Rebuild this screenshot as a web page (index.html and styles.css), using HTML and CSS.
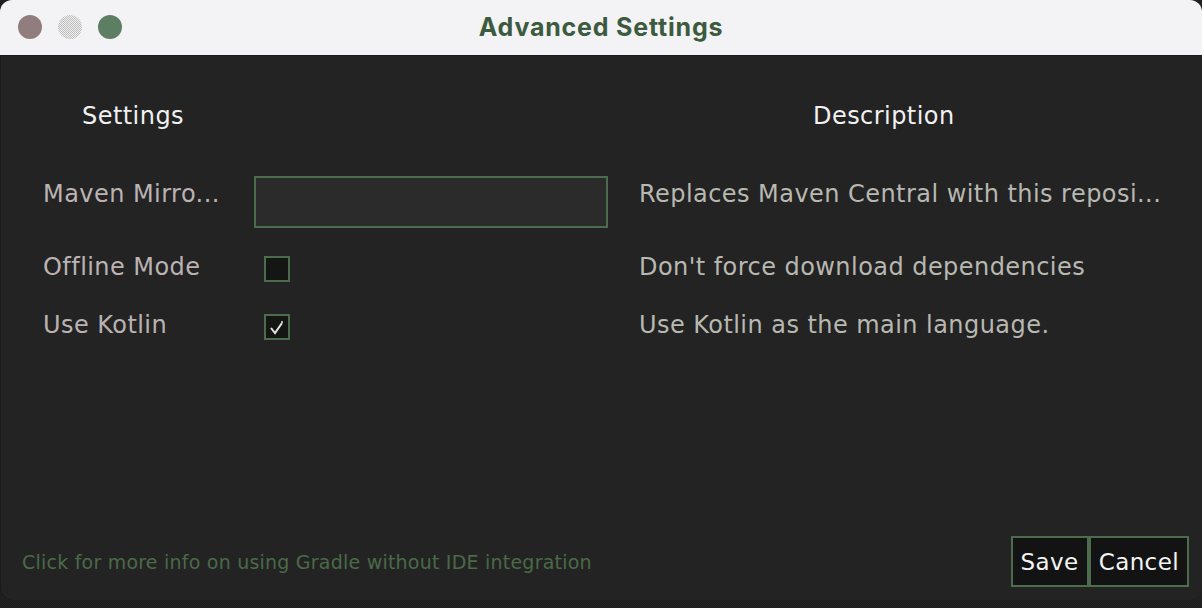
FILE: index.html
```html
<!DOCTYPE html>
<html>
<head>
<meta charset="utf-8">
<link rel="stylesheet" href="styles.css">
</head>
<body>
<div class="window">
  <div class="titlebar">
    <div class="lights">
      <span class="light red"></span>
      <span class="light gray"></span>
      <span class="light green"></span>
    </div>
    <div class="title">Advanced Settings</div>
    <div></div>
  </div>
  <div class="content">
    <div class="heads">
      <div class="head-settings">Settings</div>
      <div class="head-desc">Description</div>
    </div>
    <div class="row row-input">
      <div class="label">Maven Mirro...</div>
      <div class="control"><div class="textfield"></div></div>
      <div class="desc">Replaces Maven Central with this reposi...</div>
    </div>
    <div class="row row-check">
      <div class="label">Offline Mode</div>
      <div class="control"><span class="checkbox"></span></div>
      <div class="desc">Don't force download dependencies</div>
    </div>
    <div class="row row-check">
      <div class="label">Use Kotlin</div>
      <div class="control"><span class="checkbox"><svg width="22" height="22" viewBox="0 0 22 22"><polyline points="5,12 9,17 16,7" fill="none" stroke="#e4e4e4" stroke-width="2"/><rect x="15" y="5" width="2" height="2" fill="#c9a5a5"/></svg></span></div>
      <div class="desc">Use Kotlin as the main language.</div>
    </div>
    <div class="spacer"></div>
    <div class="footer">
      <div class="link">Click for more info on using Gradle without IDE integration</div>
      <div class="buttons">
        <div class="btn">Save</div>
        <div class="btn">Cancel</div>
      </div>
    </div>
  </div>
</div>
</body>
</html>
```
FILE: styles.css
```css
html, body {
  margin: 0;
  padding: 0;
}
body {
  width: 1202px;
  height: 608px;
  background: repeating-conic-gradient(#1a1a1a 0 25%, #262626 0 50%) 0 0 / 2px 2px;
  overflow: hidden;
  font-family: "DejaVu Sans", "Liberation Sans", sans-serif;
}
.window {
  width: 1202px;
  height: 600px;
  border-radius: 12px;
  overflow: hidden;
  background: #232323;
  display: flex;
  flex-direction: column;
  box-shadow: inset 1px 0 0 #1a1a1a;
}
.titlebar {
  height: 56px;
  flex: none;
  background: #f3f3f5;
  display: grid;
  grid-template-columns: 1fr auto 1fr;
  align-items: center;
  border-bottom: 1px solid #1b1b1b;
  box-sizing: border-box;
}
.lights {
  display: flex;
  gap: 16px;
  padding-left: 18px;
  padding-bottom: 1px;
}
.light {
  width: 24px;
  height: 24px;
  border-radius: 50%;
  display: block;
}
.light.red { background: #917d7d; }
.light.gray {
  background: repeating-conic-gradient(#bdbdbd 0 25%, #f0f0f0 0 50%) 0 0 / 2px 2px;
}
.light.green { background: #5d7e63; }
.title {
  font-family: Inter, "Noto Sans", sans-serif;
  font-weight: 700;
  font-size: 25px;
  letter-spacing: 0.8px;
  color: #3c5a3e;
  padding-bottom: 2px;
}
.content {
  flex: 1;
  display: flex;
  flex-direction: column;
}
.heads {
  display: flex;
  padding-top: 45px;
  font-size: 24px;
  letter-spacing: 0.45px;
  line-height: 30px;
  color: #f1f1f1;
}
.head-settings {
  padding-left: 82px;
  width: 813px;
  box-sizing: border-box;
}
.row {
  display: flex;
  font-size: 24px;
  letter-spacing: 0.45px;
  line-height: 30px;
  align-items: center;
}
.row-input {
  margin-top: 45px;
  align-items: flex-start;
}
.row-input .label, .row-input .desc { margin-top: 3px; }
.row-check { margin-top: 26px; }
.row-check .label, .row-check .desc {
  line-height: 26px;
  padding-bottom: 4px;
}
.row-check + .row-check { margin-top: 28px; }
.label {
  width: 211px;
  padding-left: 43px;
  color: #bbb3b3;
  flex: none;
  white-space: nowrap;
}
.control {
  width: 385px;
  flex: none;
  display: flex;
}
.desc {
  color: #b8b8b1;
  white-space: nowrap;
}
.textfield {
  width: 354px;
  height: 52px;
  box-sizing: border-box;
  border: 2px solid #4d6c4d;
  background: #2b2b2b;
}
.checkbox {
  width: 26px;
  height: 26px;
  box-sizing: border-box;
  border: 2px solid #4d6c4d;
  background: #141614;
  margin-left: 10px;
  display: block;
}
.checkbox svg { display: block; }
.spacer { flex: 1; }
.footer {
  display: flex;
  align-items: center;
  justify-content: space-between;
  padding: 0 13px 13px 22px;
}
.link {
  font-size: 19px;
  letter-spacing: 0.22px;
  color: #4a6a48;
  padding-top: 1px;
}
.buttons {
  display: flex;
}
.btn {
  height: 51px;
  box-sizing: border-box;
  border: 2px solid #4d6c4d;
  background: #121312;
  color: #f4f4f4;
  font-size: 23px;
  letter-spacing: 0.4px;
  display: flex;
  align-items: center;
  padding: 0 8px;
}
```
